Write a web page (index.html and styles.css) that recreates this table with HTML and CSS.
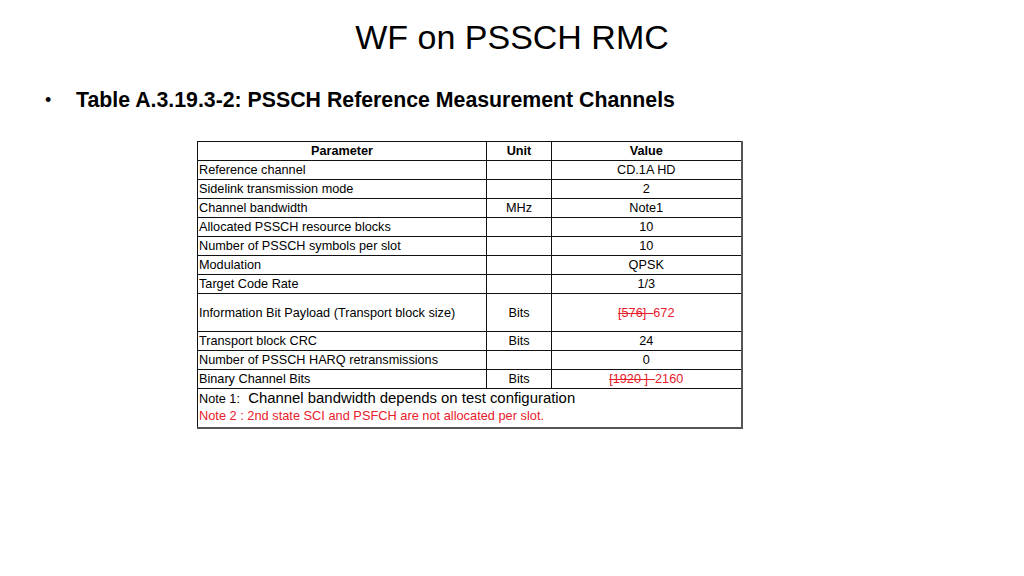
FILE: index.html
```html
<!DOCTYPE html>
<html>
<head>
<meta charset="utf-8">
<link rel="stylesheet" href="styles.css">
</head>
<body>
<div class="slide">
  <h1 class="title">WF on PSSCH RMC</h1>
  <ul class="bullets">
    <li>Table A.3.19.3-2: PSSCH Reference Measurement Channels</li>
  </ul>
  <table class="rmc">
    <colgroup>
      <col class="c-param">
      <col class="c-unit">
      <col class="c-value">
    </colgroup>
    <thead>
      <tr><th>Parameter</th><th>Unit</th><th>Value</th></tr>
    </thead>
    <tbody>
      <tr><td class="l">Reference channel</td><td></td><td>CD.1A HD</td></tr>
      <tr><td class="l">Sidelink transmission mode</td><td></td><td>2</td></tr>
      <tr><td class="l">Channel bandwidth</td><td>MHz</td><td>Note1</td></tr>
      <tr><td class="l">Allocated PSSCH resource blocks</td><td></td><td>10</td></tr>
      <tr><td class="l">Number of PSSCH symbols per slot</td><td></td><td>10</td></tr>
      <tr><td class="l">Modulation</td><td></td><td>QPSK</td></tr>
      <tr><td class="l">Target Code Rate</td><td></td><td>1/3</td></tr>
      <tr class="tall"><td class="l">Information Bit Payload (Transport block size)</td><td>Bits</td><td class="red"><s>[576]&nbsp;&nbsp;</s>672</td></tr>
      <tr><td class="l">Transport block CRC</td><td>Bits</td><td>24</td></tr>
      <tr><td class="l">Number of PSSCH HARQ retransmissions</td><td></td><td>0</td></tr>
      <tr><td class="l">Binary Channel Bits</td><td>Bits</td><td class="red"><s>[1920 ]&nbsp;&nbsp;</s>2160</td></tr>
      <tr class="notes">
        <td colspan="3" class="l">
          <div class="note1"><span class="small">Note 1:</span>&nbsp; Channel bandwidth depends on test configuration</div>
          <div class="note2">Note 2 : 2nd state SCI and PSFCH are not allocated per slot.</div>
        </td>
      </tr>
    </tbody>
  </table>
</div>
</body>
</html>
```

FILE: styles.css
```css
html, body {
  margin: 0;
  padding: 0;
  background: #ffffff;
}
body {
  font-family: "Liberation Sans", Arial, sans-serif;
  color: #000;
}
.slide {
  width: 1024px;
  height: 576px;
  overflow: hidden;
}
.title {
  margin: 0;
  padding-top: 17px;
  font-size: 34px;
  font-weight: normal;
  line-height: 40px;
  text-align: center;
}
.bullets {
  margin: 30px 0 0 0;
  padding: 0 0 0 76px;
  list-style: none;
}
.bullets li {
  position: relative;
  font-size: 21.3px;
  font-weight: bold;
  line-height: 26px;
}
.bullets li::before {
  content: "\2022";
  position: absolute;
  left: -31px;
  top: 0;
  font-weight: normal;
  font-size: 18px;
}
.rmc {
  margin: 28px 0 0 197px;
  border-collapse: collapse;
  table-layout: fixed;
  width: 544px;
  font-size: 12.7px;
}
.c-param { width: 289px; }
.c-unit { width: 65px; }
.c-value { width: 190px; }
.rmc th, .rmc td {
  border: 1px solid #111;
  padding: 0;
  height: 18px;
  line-height: 18px;
  text-align: center;
  vertical-align: middle;
  white-space: nowrap;
}
.rmc th {
  font-weight: bold;
}
.rmc td.l {
  text-align: left;
  padding-left: 1px;
}
.rmc th:last-child, .rmc td:last-child {
  border-right: 2px solid #555;
}
.rmc tr.tall td {
  height: 37px;
}
.rmc td.red {
  color: #e8202a;
}
.rmc tr.notes td {
  height: 38px;
  vertical-align: top;
  border-bottom: 2px solid #555;
}
.note1 {
  font-size: 14.9px;
  line-height: 17px;
  padding-top: 1px;
}
.note1 .small {
  font-size: 12.7px;
}
.note2 {
  color: #e8202a;
  font-size: 12.8px;
  line-height: 15px;
}
```
